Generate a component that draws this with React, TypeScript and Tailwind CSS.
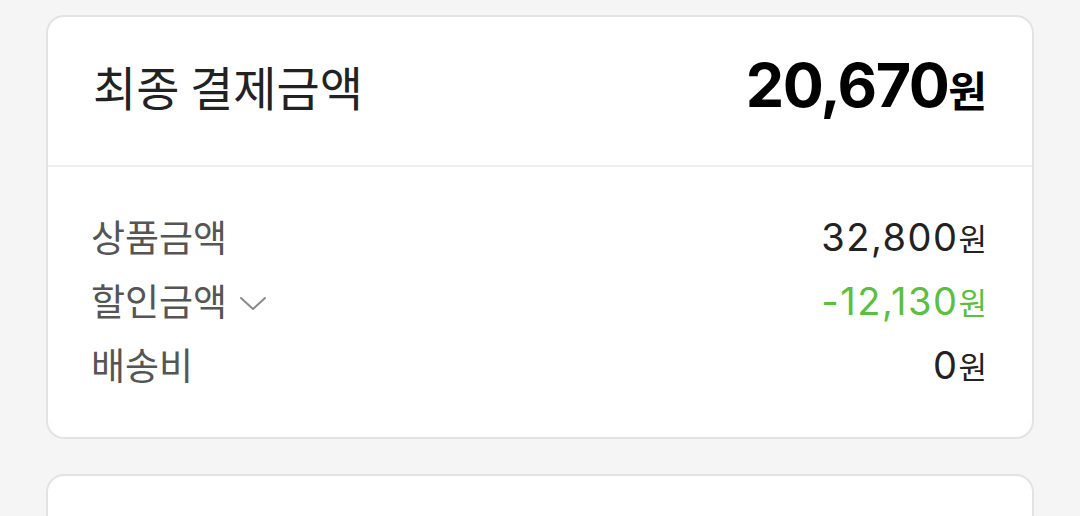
const ko = { fontFamily: '"Noto Sans CJK KR", "Noto Sans", sans-serif' };
const num = { fontFamily: 'Inter, "Noto Sans CJK KR", sans-serif' };

interface Row {
  label: string;
  amount: string;
  discount?: boolean;
}

const rows: Row[] = [
  { label: "상품금액", amount: "32,800" },
  { label: "할인금액", amount: "-12,130", discount: true },
  { label: "배송비", amount: "0" },
];

function Chevron() {
  return (
    <svg width="28" height="16" viewBox="0 0 28 16" fill="none" className="mt-[6px]">
      <polyline points="2,2 14,13 26,2" stroke="#8a8a8a" strokeWidth="2" strokeLinecap="round" strokeLinejoin="round" />
    </svg>
  );
}

export default function App() {
  return (
    <div className="min-h-screen bg-[#f5f5f5] px-[46px] pt-[15px] flex flex-col gap-[35px]">
      <section className="bg-white border-2 border-[#e3e3e3] rounded-[18px]">
        <div className="h-[150px] pb-[10px] flex items-center justify-between px-[45px] border-b-2 border-[#eeeeee]">
          <span className="text-[47px] font-normal text-[#222222]" style={ko}>
            최종 결제금액
          </span>
          <span className="flex items-baseline text-black">
            <span className="text-[61px] font-bold tracking-[-1.5px]" style={num}>
              20,670
            </span>
            <span className="text-[42px] font-bold" style={ko}>
              원
            </span>
          </span>
        </div>
        <div className="pt-[38px] pb-[40px] px-[43px]">
          {rows.map((row) => (
            <div key={row.label} className="h-[64px] flex items-center justify-between">
              <span className="flex items-center gap-[12px] text-[37px] text-[#555555]" style={ko}>
                {row.label}
                {row.discount && <Chevron />}
              </span>
              <span className={`flex items-baseline mr-[2px] ${row.discount ? "text-[#5bbf3f]" : "text-[#222222]"}`}>
                <span className="text-[38px] tracking-[1.5px]" style={num}>
                  {row.amount}
                </span>
                <span className="text-[31px]" style={ko}>
                  원
                </span>
              </span>
            </div>
          ))}
        </div>
      </section>
      <section className="bg-white border-2 border-[#e3e3e3] rounded-[18px] h-[200px]" />
    </div>
  );
}
